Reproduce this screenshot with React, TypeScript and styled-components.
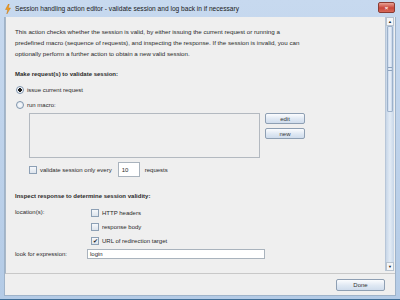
import React from "react";
import styled, { createGlobalStyle } from "styled-components";

const Global = createGlobalStyle`
  html, body { margin: 0; padding: 0; }
  body { font-family: "Liberation Sans", Arial, sans-serif; }
`;

const Window = styled.div`
  width: 400px;
  height: 300px;
  box-sizing: border-box;
  background: linear-gradient(#c7d9ef, #b4cbe6);
  border-bottom: 1px solid #3f6d96;
  display: flex;
  flex-direction: column;
  overflow: hidden;
  font-size: 6px;
  color: #2a2a2a;
`;

const TitleBar = styled.div`
  height: 17px;
  display: flex;
  align-items: center;
  padding: 0 5px 0 5px;
  gap: 4px;
`;

const TitleText = styled.div`
  flex: 1;
  font-size: 6.6px;
  color: #1a1a1a;
`;

const CloseButton = styled.div`
  width: 15px;
  height: 9px;
  border-radius: 2px;
  border: 1px solid #8a3b33;
  background: linear-gradient(#e8a296, #c9463a 55%, #d86a5a);
  display: flex;
  align-items: center;
  justify-content: center;
  color: #fff;
  font-size: 6px;
  font-weight: bold;
  line-height: 1;
  margin-top: -2px;
`;

const Body = styled.div`
  flex: 1;
  margin: 0 4px 3px 4px;
  background: #efefef;
  display: flex;
  flex-direction: column;
  border: 1px solid #9fb3c9;
  border-top: none;
`;

const ScrollPane = styled.div`
  height: 256px;
  display: flex;
  border-bottom: 1px solid #c8c8c8;
  border-left: 1px solid #a9b8c8;
`;

const Content = styled.div`
  flex: 1;
  padding: 9px 0 0 9px;
  display: flex;
  flex-direction: column;
`;

const Description = styled.p`
  margin: 0;
  line-height: 11px;
  width: 290px;
  font-size: 6.2px;
`;

const SectionHeader = styled.div<{ $top: number }>`
  font-weight: bold;
  line-height: 10px;
  margin-top: ${(p) => p.$top}px;
`;

const OptionRow = styled.label<{ $top: number }>`
  display: flex;
  align-items: center;
  gap: 3px;
  height: 10px;
  margin-top: ${(p) => p.$top}px;
`;

const Radio = styled.span<{ $on?: boolean }>`
  width: 6px;
  height: 6px;
  border-radius: 50%;
  border: 1px solid #7f95ad;
  background: radial-gradient(circle, ${(p) => (p.$on ? "#1d1d1d 0 1.6px, #f5f7fa 2px" : "#fafbfc 0, #dfe6ee 100%")});
  margin-left: 1px;
`;

const Check = styled.span`
  width: 6px;
  height: 6px;
  border: 1px solid #8da0b5;
  background: linear-gradient(#f6f8fb, #dde4ec);
  display: flex;
  align-items: center;
  justify-content: center;
  font-size: 6px;
  line-height: 1;
  color: #222;
`;

const MacroRow = styled.div`
  display: flex;
  gap: 5px;
  margin-top: 3px;
  margin-left: 14px;
`;

const MacroBox = styled.div`
  width: 229px;
  height: 43px;
  border: 1px solid #b3b9c0;
  background: #efefef;
`;

const ButtonColumn = styled.div`
  display: flex;
  flex-direction: column;
  gap: 4px;
`;

const Button = styled.div<{ $w: number; $h?: number }>`
  width: ${(p) => p.$w}px;
  height: ${(p) => p.$h ?? 9}px;
  border: 1px solid #8e9fb3;
  border-radius: 2px;
  background: linear-gradient(#fbfcfe, #dfe8f3 55%, #cfdcec);
  display: flex;
  align-items: center;
  justify-content: center;
  font-size: 6px;
  color: #333;
`;

const EveryRow = styled.div`
  display: flex;
  align-items: center;
  gap: 3px;
  margin-top: 3px;
  margin-left: 14px;
  height: 17px;
`;

const NumberBox = styled.div`
  width: 22px;
  height: 15px;
  margin-left: 3px;
  margin-right: 2px;
  border: 1px solid #a9b3bd;
  background: #fff;
  display: flex;
  align-items: center;
  padding-left: 3px;
  box-sizing: border-box;
`;

const LocationGrid = styled.div`
  display: grid;
  grid-template-columns: 76px 1fr;
  margin-top: 6px;
`;

const LocationLabel = styled.div`
  line-height: 10px;
`;

const LocationChecks = styled.div`
  display: flex;
  flex-direction: column;
  gap: 4px;
  margin-top: 1px;
  font-size: 6px;
`;

const ExpressionRow = styled.div`
  display: grid;
  grid-template-columns: 72px 178px;
  align-items: end;
  margin-top: 3px;
`;

const ExpressionInput = styled.div`
  height: 10px;
  border: 1px solid #a9b3bd;
  background: #fff;
  display: flex;
  align-items: center;
  padding-left: 2px;
  box-sizing: border-box;
`;

const Scrollbar = styled.div`
  width: 8px;
  margin: 0 1px 2px 0;
  display: flex;
  flex-direction: column;
  background: linear-gradient(90deg, #c7d6e8, #e2ebf5 50%, #c7d6e8);
  border-left: 1px solid #b7c6d8;
`;

const Arrow = styled.div`
  height: 7px;
  display: flex;
  align-items: center;
  justify-content: center;
  font-size: 4px;
  color: #222;
  background: #f4f6f8;
  border: 1px solid #b8c3cf;
`;

const Thumb = styled.div`
  height: 84px;
  margin: 0 1px;
  background: linear-gradient(90deg, #cad9ec, #eef3fa 50%, #c3d3e8);
  border: 1px solid #9db1ca;
  border-radius: 1px;
  display: flex;
  align-items: center;
  justify-content: center;
`;

const Grip = styled.div`
  width: 4px;
  height: 2px;
  border-top: 1px solid #8ea3bd;
  border-bottom: 1px solid #8ea3bd;
`;

const Track = styled.div`
  flex: 1;
`;

const Footer = styled.div`
  flex: 1;
  display: flex;
  justify-content: flex-end;
  align-items: flex-start;
  padding: 5px 10px 0 0;
`;

export default function App() {
  return (
    <>
      <Global />
      <Window>
        <TitleBar>
          <svg width="6" height="10" viewBox="0 0 6 10">
            <path d="M3.5 0 L0.5 5.5 H2.8 L1.8 10 L5.5 4 H3.2 L4.2 0 Z" fill="#f0a020" stroke="#c56a00" strokeWidth="0.4" />
          </svg>
          <TitleText>Session handling action editor - validate session and log back in if necessary</TitleText>
          <CloseButton>×</CloseButton>
        </TitleBar>
        <Body>
          <ScrollPane>
            <Content>
              <Description>
                This action checks whether the session is valid, by either issuing the current request or running a
                <br />
                predefined macro (sequence of requests), and inspecting the response. If the session is invalid, you can
                <br />
                optionally perform a further action to obtain a new valid session.
              </Description>
              <SectionHeader $top={10}>Make request(s) to validate session:</SectionHeader>
              <OptionRow $top={6}>
                <Radio $on />
                issue current request
              </OptionRow>
              <OptionRow $top={5}>
                <Radio />
                run macro:
              </OptionRow>
              <MacroRow>
                <MacroBox />
                <ButtonColumn>
                  <Button $w={38}>edit</Button>
                  <Button $w={38}>new</Button>
                </ButtonColumn>
              </MacroRow>
              <EveryRow>
                <Check />
                validate session only every
                <NumberBox>10</NumberBox>
                requests
              </EveryRow>
              <SectionHeader $top={13}>Inspect response to determine session validity:</SectionHeader>
              <LocationGrid>
                <LocationLabel>location(s):</LocationLabel>
                <LocationChecks>
                  <OptionRow $top={0}>
                    <Check />
                    HTTP headers
                  </OptionRow>
                  <OptionRow $top={0}>
                    <Check />
                    response body
                  </OptionRow>
                  <OptionRow $top={0}>
                    <Check>✔</Check>
                    URL of redirection target
                  </OptionRow>
                </LocationChecks>
              </LocationGrid>
              <ExpressionRow>
                <LocationLabel>look for expression:</LocationLabel>
                <ExpressionInput>login</ExpressionInput>
              </ExpressionRow>
            </Content>
            <Scrollbar>
              <Arrow>▲</Arrow>
              <Thumb>
                <Grip />
              </Thumb>
              <Track />
              <Arrow>▼</Arrow>
            </Scrollbar>
          </ScrollPane>
          <Footer>
            <Button $w={47} $h={10}>Done</Button>
          </Footer>
        </Body>
      </Window>
    </>
  );
}
